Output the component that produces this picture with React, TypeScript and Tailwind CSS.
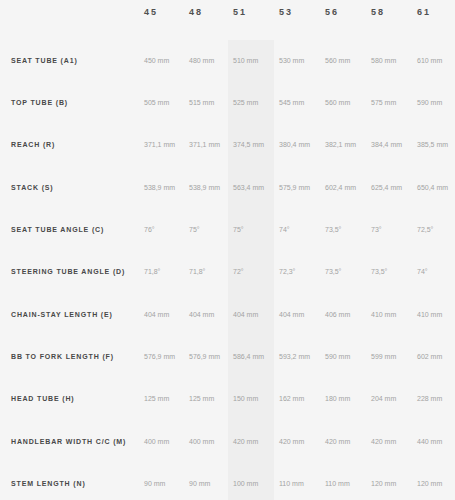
const sizes = ["45", "48", "51", "53", "56", "58", "61"]

const rows: { label: string; values: string[] }[] = [
  { label: "Seat tube (A1)", values: ["450 mm", "480 mm", "510 mm", "530 mm", "560 mm", "580 mm", "610 mm"] },
  { label: "Top tube (B)", values: ["505 mm", "515 mm", "525 mm", "545 mm", "560 mm", "575 mm", "590 mm"] },
  { label: "Reach (R)", values: ["371,1 mm", "371,1 mm", "374,5 mm", "380,4 mm", "382,1 mm", "384,4 mm", "385,5 mm"] },
  { label: "Stack (S)", values: ["538,9 mm", "538,9 mm", "563,4 mm", "575,9 mm", "602,4 mm", "625,4 mm", "650,4 mm"] },
  { label: "Seat tube angle (C)", values: ["76°", "75°", "75°", "74°", "73,5°", "73°", "72,5°"] },
  { label: "Steering tube angle (D)", values: ["71,8°", "71,8°", "72°", "72,3°", "73,5°", "73,5°", "74°"] },
  { label: "Chain-stay length (E)", values: ["404 mm", "404 mm", "404 mm", "404 mm", "406 mm", "410 mm", "410 mm"] },
  { label: "BB to fork length (F)", values: ["576,9 mm", "576,9 mm", "586,4 mm", "593,2 mm", "590 mm", "599 mm", "602 mm"] },
  { label: "Head tube (H)", values: ["125 mm", "125 mm", "150 mm", "162 mm", "180 mm", "204 mm", "228 mm"] },
  { label: "Handlebar width c/c (M)", values: ["400 mm", "400 mm", "420 mm", "420 mm", "420 mm", "420 mm", "440 mm"] },
  { label: "Stem length (N)", values: ["90 mm", "90 mm", "100 mm", "110 mm", "110 mm", "120 mm", "120 mm"] },
]

const grid = "grid grid-cols-[139px_45px_44px_46px_46px_46px_46px_43px]"

export default function App() {
  return (
    <div className="w-[455px] h-[500px] overflow-hidden bg-[#f5f5f5] font-['Liberation_Sans',Arial,sans-serif]">
      {/* header */}
      <div className={`${grid} h-[40px]`}>
        <div />
        {sizes.map((s) => (
          <div key={s} className="pl-[5px] pt-[8px] text-[9px] font-bold tracking-[2px] text-[#505050] leading-[9px]">
            {s}
          </div>
        ))}
      </div>

      {rows.map((row) => (
        <div key={row.label} className={`${grid} h-[42.3px]`}>
          <div className="flex items-center pl-[11px] text-[7px] font-bold uppercase tracking-[0.85px] text-[#484848] whitespace-nowrap">
            {row.label}
          </div>
          {row.values.map((v, i) => (
            <div
              key={i}
              className={`flex items-center pl-[5px] text-[7px] text-[#a3a3a3] whitespace-nowrap ${i === 2 ? "bg-[#eeeeee]" : ""}`}
            >
              {v}
            </div>
          ))}
        </div>
      ))}
    </div>
  )
}
